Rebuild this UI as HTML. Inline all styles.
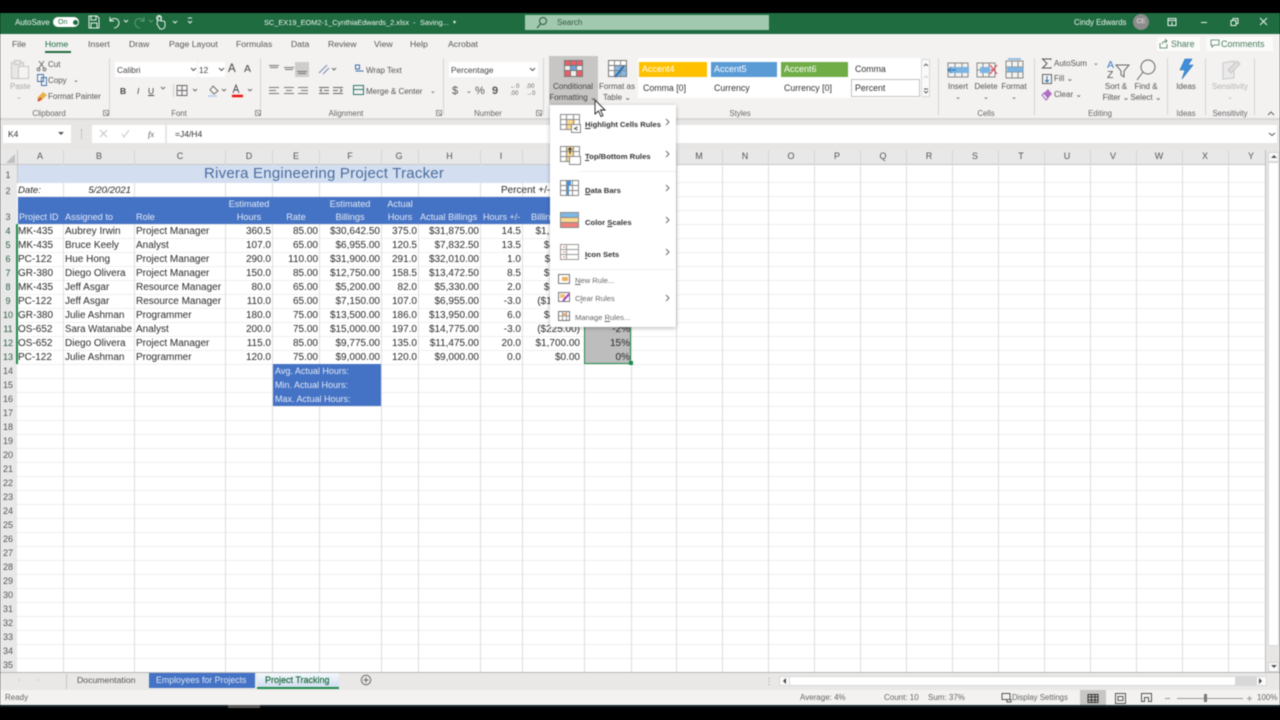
<!DOCTYPE html>
<html><head><meta charset="utf-8"><title>Excel</title>
<style>
html,body{margin:0;padding:0;background:#000;width:1280px;height:720px;overflow:hidden}
#w{position:relative;width:1280px;height:720px;overflow:hidden;font-family:"Liberation Sans",sans-serif;color:#444;filter:blur(.4px)}
#w div,#w svg{position:absolute}
.t{position:absolute;white-space:nowrap;font-size:8px;line-height:12px;color:#555;margin-top:1px}
.n{margin-top:0}
.tab{font-size:8.700px;color:#555;top:38px;margin-top:0}
.gl{font-size:7.800px;top:107px;color:#666;transform:translateX(-50%)}
.c{transform:translateX(-50%);text-align:center}
.h{position:absolute;top:149px;height:15px;line-height:15px;font-size:9px;color:#555;text-align:center}
.r{position:absolute;left:0;width:16px;height:14px;line-height:14px;text-align:center;font-size:9px;color:#555}
.v{position:absolute;top:164px;width:1px;height:508px;background:#dedede}
.row{position:absolute;left:0;width:640px;height:14px}
.row span{position:absolute;top:1px;line-height:14px;font-size:10px;color:#2a2a2a;white-space:nowrap}
.a{left:18px}.b{left:65px}.cc{left:136px}
.d,.e,.f,.g,.hh,.i,.j,.k{text-align:right}
.d{right:369px}.e{right:322px}.f{right:260px}.g{right:223px}.hh{right:161px}.i{right:119px}.j{right:60px}.k{right:10px}
.w{position:absolute;font-size:9.200px;line-height:13px;color:#e4ebf7;white-space:nowrap}
.m{position:absolute;white-space:nowrap;font-size:7.700px;line-height:12px;color:#333;font-weight:bold;margin-top:.5px}
.m2{position:absolute;white-space:nowrap;font-size:7.600px;line-height:12px;color:#666;margin-top:1px}
.sb{position:absolute;font-size:8px;line-height:12px;color:#666;white-space:nowrap;top:692px}
.s{left:0;top:58px;width:1px;height:57px;background:#d5d3d1}
</style></head><body><div id="w">
<!-- title bar -->
<div style="left:0;top:13px;width:1280px;height:21px;background:#1f6c41"></div>
<span class="t" style="left:15px;top:16px;color:#f0f5f0">AutoSave</span>
<div style="left:53px;top:17px;width:26px;height:10px;border-radius:6px;background:#fff"></div>
<div style="left:73px;top:19.500px;width:5px;height:5px;border-radius:3px;background:#1f6c41"></div>
<span class="t" style="left:58px;top:16px;color:#1f6c41;font-size:7px">On</span>
<svg style="left:86px;top:14px" width="110" height="16" fill="none" stroke="#e8f0ea" stroke-width="1"><path d="M3 2h8l2 2v10H3zM5 2v4h5V2M5 14V9h6v5"/><path d="M24 3v4h4M24 7c3-4 9-3 9 2 0 3-3 5-5 5"/><path d="M38 6l2 2 2-2"/><path d="M58 3v4h-4M58 7c-3-4-9-3-9 2 0 3 3 5 5 5" stroke="#5c9a76"/><path d="M63 6l2 2 2-2" stroke="#5c9a76"/><path d="M72 4c0-2 3-2 3 0v3h2c2 0 2 1 2 3v2c0 2-2 3-3 3h-2l-3-5z"/><circle cx="73" cy="4" r="2.500"/><path d="M87 7l2 2 2-2"/><path d="M102 4h4M102 7l2 2 2-2"/></svg>
<span class="t" style="left:264px;top:16px;color:#f0f5f0;font-size:7.400px">SC_EX19_EOM2-1_CynthiaEdwards_2.xlsx</span>
<span class="t" style="left:413px;top:16px;color:#f0f5f0;font-size:7.400px">-</span><span class="t" style="left:420px;top:16px;color:#f0f5f0;font-size:7.400px">Saving...</span><span class="t" style="left:453px;top:16px;color:#f0f5f0;font-size:6px">▾</span>
<div style="left:525px;top:15px;width:244px;height:15px;background:#a1c9af"></div>
<svg style="left:536px;top:16px" width="12" height="13" fill="none" stroke="#2a5a3d"><circle cx="7" cy="5" r="3.500"/><path d="M4.500 8L1 12"/></svg>
<span class="t" style="left:557px;top:16px;color:#33593f">Search</span>
<span class="t" style="left:1074px;top:16px;color:#f0f5f0;font-size:7.800px">Cindy Edwards</span>
<div style="left:1133px;top:14px;width:16px;height:16px;border-radius:8px;background:#8d8d8d;color:#eee;font-size:6.500px;line-height:16px;text-align:center">CE</div>
<svg style="left:1165px;top:14px" width="110" height="16" fill="none" stroke="#eaf2ec"><path d="M3 4.500h8v7H3zM3 6.500h8M7 8v3"/><path d="M36 8.500h6"/><path d="M66 6.500h5v5h-5zM68 6.500v-2h5v5h-2"/><path d="M95 4l7 7M102 4l-7 7"/></svg>
<!-- ribbon -->
<div style="left:0;top:34px;width:1280px;height:84px;background:#f3f2f1"></div>
<span class="t tab" style="left:12px">File</span>
<span class="t tab" style="left:45px;color:#1f6c41">Home</span>
<div style="left:45px;top:51px;width:26px;height:2px;background:#1f6c41"></div>
<span class="t tab" style="left:88px">Insert</span><span class="t tab" style="left:129px">Draw</span><span class="t tab" style="left:169px">Page Layout</span><span class="t tab" style="left:236px">Formulas</span><span class="t tab" style="left:291px">Data</span><span class="t tab" style="left:328px">Review</span><span class="t tab" style="left:374px">View</span><span class="t tab" style="left:410px">Help</span><span class="t tab" style="left:448px">Acrobat</span>
<div style="left:1157px;top:37px;width:43px;height:14px;background:#fbfbfa"></div>
<span class="t n" style="left:1171px;top:38px;font-size:8.800px;color:#4a7a5c">Share</span>
<svg style="left:1159px;top:38px" width="10" height="11" fill="none" stroke="#4a7a5c" stroke-width=".8"><path d="M1 5v5h7V6M3 6c1-3 3-3 5-3M6 1l2 2-2 2"/></svg>
<div style="left:1206px;top:37px;width:67px;height:14px;background:#fbfbfa"></div>
<span class="t n" style="left:1221px;top:38px;font-size:9px;color:#4a7a5c">Comments</span>
<svg style="left:1210px;top:38px" width="10" height="11" fill="none" stroke="#4a7a5c" stroke-width=".8"><path d="M1 2h8v5H4L2 9V7H1z"/></svg>
<!-- group seps -->
<div class="s" style="left:109px"></div><div class="s" style="left:260px"></div><div class="s" style="left:443px"></div><div class="s" style="left:543px"></div><div class="s" style="left:938px"></div><div class="s" style="left:1034px"></div><div class="s" style="left:1167px"></div><div class="s" style="left:1205px"></div><div class="s" style="left:1254px"></div>
<span class="t gl" style="left:49px">Clipboard</span><span class="t gl" style="left:179px">Font</span><span class="t gl" style="left:346px">Alignment</span><span class="t gl" style="left:488px">Number</span><span class="t gl" style="left:740px">Styles</span><span class="t gl" style="left:986px">Cells</span><span class="t gl" style="left:1100px">Editing</span><span class="t gl" style="left:1186px">Ideas</span><span class="t gl" style="left:1230px">Sensitivity</span>
<svg style="left:102px;top:109px" width="440" height="9" fill="none" stroke="#777" stroke-width=".8"><path d="M1.500 1.500h5v5h-5zM3 3l3 3M153.500 1.500h5v5h-5zM155 3l3 3M334.500 1.500h5v5h-5zM336 3l3 3M434.500 1.500h5v5h-5zM436 3l3 3"/></svg>
<svg style="left:1266px;top:110px" width="10" height="7" fill="none" stroke="#666"><path d="M2 5l3-3 3 3"/></svg>
<!-- clipboard -->
<svg style="left:10px;top:59px" width="21" height="21" fill="#e9e8e6" stroke="#c6c5c3"><path d="M1.500 3.500h12v16h-12z"/><path d="M4.500 1.500h6v4h-6z"/><path d="M8.500 7.500h10v12h-10z" fill="#f4f4f3"/></svg>
<span class="t" style="left:10px;top:80px;color:#a8a8a8">Paste</span><span class="t" style="left:16px;top:91px;color:#a8a8a8;font-size:7px">⌄</span>
<svg style="left:36px;top:59px" width="14" height="28" fill="none" stroke="#666" stroke-width=".9"><path d="M3 2l5 7M8 2L3 9"/><circle cx="2.500" cy="10.500" r="1.400"/><circle cx="8.500" cy="10.500" r="1.400"/><path d="M1.500 15.500h6v7h-6zM5.500 18.500h5v8h-5z" stroke="#3e6fa8"/></svg>
<svg style="left:35px;top:90px" width="13" height="13"><path d="M2 8l6-6 4 3-6 6z" fill="#e8b24a"/><path d="M3 11l3-3" stroke="#c43" stroke-width="2"/></svg>
<span class="t" style="left:48px;top:58px">Cut</span><span class="t" style="left:48px;top:74px">Copy</span><span class="t" style="left:73px;top:74px;font-size:7px">⌄</span><span class="t" style="left:48px;top:90px">Format Painter</span>
<!-- font -->
<div style="left:115px;top:62px;width:82px;height:15px;background:#fff"></div><div style="left:198px;top:62px;width:27px;height:15px;background:#fff"></div>
<span class="t n" style="left:117px;top:64px;color:#444;font-size:8.300px">Calibri</span><span class="t n" style="left:199px;top:64px;color:#444;font-size:8.300px">12</span>
<svg style="left:190px;top:67px" width="36" height="6" fill="none" stroke="#555"><path d="M1 1l2.500 2.500L6 1M29 1l2.500 2.500L34 1"/></svg>
<span class="t n" style="left:228px;top:63px;font-size:11.500px;color:#444">A</span><span class="t n" style="left:244px;top:63px;font-size:10.500px;color:#444">A</span>
<span class="t" style="left:120px;top:84px;font-weight:bold;color:#444;font-size:8.500px">B</span><span class="t" style="left:137px;top:84px;font-style:italic;color:#444;font-size:8.500px">I</span><span class="t" style="left:148px;top:84px;text-decoration:underline;color:#444;font-size:8.500px">U</span>
<svg style="left:160px;top:82px" width="96" height="16" fill="none" stroke="#666" stroke-width=".9"><path d="M1 5l2 2 2-2"/><path d="M13.500 2v13" stroke="#ccc"/><path d="M17 3.500h10v10H17zM22 3.500v10M17 8.500h10"/><path d="M33 7l2 2 2-2"/><path d="M53 4l5 5-4 3-4-4z"/><path d="M48 14h9" stroke="#c6d4ee" stroke-width="2"/><path d="M62 7l2 2 2-2"/><path d="M73 11l3-8 3 8M74 8h4" stroke="#444"/><path d="M72 14h11" stroke="#e11" stroke-width="2.500"/><path d="M88 7l2 2 2-2"/></svg>
<!-- alignment -->
<div style="left:295px;top:62px;width:14px;height:15px;background:#cfcdcb"></div>
<svg style="left:267px;top:62px" width="70" height="36" fill="none" stroke="#777"><path d="M2 3.500h10M3 5.500h8M17 5.500h10M18 7.500h8M30 9.500h10M31 11.500h8"/><path d="M2 25.500h10M2 28.500h7M2 31.500h10M17 25.500h10M19 28.500h6M17 31.500h10M31 25.500h10M34 28.500h7M31 31.500h10"/></svg>
<svg style="left:318px;top:62px" width="48" height="36" fill="none" stroke="#666"><path d="M1 11L9 3M5 12L11 6" stroke="#7a8aa8"/><path d="M14 6l2 2 2-2"/><path d="M1 25.500h10M1 31.500h10M6 28.500h5M4 27l-2 1.500 2 1.500"/><path d="M15 25.500h10M15 31.500h10M15 28.500h5M22 27l2 1.500-2 1.500"/></svg>
<svg style="left:353px;top:62px" width="12" height="36" fill="none"><path d="M2.500 3h4v4h-4zM2.500 9h8" stroke="#3e6fa8"/><path d="M.5 23.500h10v9H.5zM.5 27.500h10" stroke="#2f7a6b"/></svg>
<span class="t" style="left:366px;top:64px">Wrap Text</span><span class="t" style="left:366px;top:85px">Merge &amp; Center</span><span class="t" style="left:430px;top:85px;font-size:7px">⌄</span>
<!-- number -->
<div style="left:449px;top:62px;width:89px;height:15px;background:#fff"></div>
<span class="t n" style="left:451px;top:64px;color:#444;font-size:8.300px">Percentage</span>
<svg style="left:529px;top:67px" width="8" height="6" fill="none" stroke="#555"><path d="M1 1l2.500 2.500L6 1"/></svg>
<span class="t" style="left:452px;top:84px;font-size:11px;color:#555">$</span><span class="t" style="left:466px;top:85px;font-size:7px">⌄</span><span class="t" style="left:475px;top:84px;font-size:11px;color:#555">%</span><span class="t" style="left:492px;top:84px;font-size:11px;font-weight:bold;color:#555">9</span>
<span class="t" style="left:510px;top:83px;font-size:6px;color:#666;line-height:7px">←0<br>.00</span><span class="t" style="left:526px;top:83px;font-size:6px;color:#666;line-height:7px">.00<br>→0</span>
<!-- conditional formatting -->
<div style="left:549px;top:56px;width:49px;height:49px;background:#c8c6c4"></div>
<svg style="left:564px;top:60px" width="19" height="17"><rect x=".5" y=".5" width="18" height="16" fill="#eee" stroke="#777"/><rect x="1" y="1" width="6" height="5" fill="#e95f66"/><rect x="13" y="1" width="5" height="5" fill="#e95f66"/><rect x="7" y="6" width="6" height="5" fill="#6aa5dc"/><rect x="1" y="11" width="6" height="5" fill="#e95f66"/><rect x="7" y="1" width="6" height="5" fill="#e95f66"/><rect x="13" y="11" width="5" height="5" fill="#e95f66"/><path d="M6.500 1v15M12.500 1v15M1 5.500h17M1 10.500h17" stroke="#777" fill="none"/></svg>
<span class="t c" style="left:573px;top:80px;color:#444">Conditional</span><span class="t c" style="left:573px;top:91px;color:#444">Formatting ⌄</span>
<svg style="left:608px;top:60px" width="20" height="20"><rect x=".5" y=".5" width="18" height="16" fill="#fff" stroke="#777"/><path d="M1 5.500h17" stroke="#777"/><rect x="7" y="6" width="11" height="10" fill="#86b8e4"/><path d="M6.500 1v15M12.500 1v15M1 10.500h17" stroke="#888" fill="none"/><path d="M7 17L16 6" stroke="#2f6fb0" stroke-width="2"/></svg>
<span class="t c" style="left:617px;top:80px">Format as</span><span class="t c" style="left:617px;top:91px">Table ⌄</span>
<!-- styles gallery -->
<div style="left:638px;top:58px;width:283px;height:40px;background:#fff"></div>
<div style="left:639px;top:62px;width:68px;height:15px;background:#ffc000;color:#fff;font-size:9px;line-height:15px;text-indent:3px">Accent4</div>
<div style="left:711px;top:62px;width:66px;height:15px;background:#5b9bd5;color:#fff;font-size:9px;line-height:15px;text-indent:3px">Accent5</div>
<div style="left:781px;top:62px;width:67px;height:15px;background:#70ad47;color:#fff;font-size:9px;line-height:15px;text-indent:3px">Accent6</div>
<span class="t n" style="left:855px;top:63px;color:#333;font-size:8.800px">Comma</span><span class="t n" style="left:643px;top:82px;color:#333;font-size:8.800px">Comma [0]</span><span class="t n" style="left:714px;top:82px;color:#333;font-size:8.800px">Currency</span><span class="t n" style="left:784px;top:82px;color:#333;font-size:8.800px">Currency [0]</span>
<div style="left:851px;top:79px;width:67px;height:16px;border:1.500px solid #c2c2c2;background:#fff"></div><span class="t n" style="left:855px;top:82px;color:#333;font-size:8.800px">Percent</span>
<div style="left:921px;top:59px;width:9px;height:38px;background:#fafafa;border:1px solid #d8d8d8;box-sizing:border-box"></div>
<svg style="left:922px;top:60px" width="8" height="37" fill="none" stroke="#555" stroke-width=".9"><path d="M2 6l2-2 2 2"/><path d="M2 18l2-2 2 2" stroke="#ccc"/><path d="M2 29h4M2 31l2 2 2-2"/></svg>
<!-- cells -->
<svg style="left:947px;top:58px" width="80" height="22" fill="none"><path d="M1 5h20v14H1zM8 5v14M15 5v14M1 12h20" stroke="#888"/><rect x="3" y="9" width="19" height="6" fill="#7cb3e0"/><path d="M9 12H1M4 9l-3 3 3 3" stroke="#2f75b5"/><path d="M30 5h18v14H30zM36 5v14M42 5v14M30 12h18" stroke="#888"/><rect x="33" y="9" width="10" height="6" fill="#7cb3e0"/><path d="M43 7l7 9M50 7l-7 9" stroke="#d9505a" stroke-width="1.200"/><path d="M59 3h17v17H59zM65 3v17M71 3v17M59 9h17M59 14h17" stroke="#888"/><rect x="60" y="9" width="16" height="5" fill="#7cb3e0"/><path d="M61 1h13" stroke="#7cb3e0" stroke-width="1.500"/></svg>
<span class="t c" style="left:958px;top:80px">Insert</span><span class="t c" style="left:986px;top:80px">Delete</span><span class="t c" style="left:1014px;top:80px">Format</span>
<span class="t c" style="left:958px;top:91px;font-size:7px">⌄</span><span class="t c" style="left:986px;top:91px;font-size:7px">⌄</span><span class="t c" style="left:1014px;top:91px;font-size:7px">⌄</span>
<!-- editing -->
<svg style="left:1041px;top:58px" width="12" height="12" fill="none" stroke="#555"><path d="M10 2V1H1.500l4.500 4.500L1.500 10H10V9"/></svg>
<span class="t" style="left:1054px;top:57px">AutoSum</span><span class="t" style="left:1093px;top:57px;font-size:7px">⌄</span>
<svg style="left:1041px;top:73px" width="12" height="12" fill="none"><path d="M1.500 1.500h9v9h-9z" stroke="#666"/><path d="M6 3v6M4 7l2 2 2-2" stroke="#2f75b5"/></svg>
<span class="t" style="left:1054px;top:72px">Fill ⌄</span>
<svg style="left:1041px;top:88px" width="12" height="13"><path d="M1 7l6-6 4 5-6 6z" fill="#b06fc4"/><path d="M1 7l4 5 2-2-4-5z" fill="#eee" stroke="#a060b8"/></svg>
<span class="t" style="left:1054px;top:88px">Clear ⌄</span>
<span class="t n" style="left:1107px;top:60px;font-size:10.500px;color:#3a78bd;line-height:10px">A</span><span class="t n" style="left:1107px;top:70px;font-size:10.500px;color:#555;line-height:10px">Z</span>
<svg style="left:1114px;top:58px" width="48" height="24" fill="none" stroke="#666"><path d="M2 7h13l-5 6v6l-3-2v-4z"/><circle cx="34" cy="9" r="7"/><path d="M29 14l-6 8"/></svg>
<span class="t c" style="left:1116px;top:80px">Sort &amp;</span><span class="t c" style="left:1116px;top:91px">Filter ⌄</span><span class="t c" style="left:1146px;top:80px">Find &amp;</span><span class="t c" style="left:1146px;top:91px">Select ⌄</span>
<!-- ideas / sensitivity -->
<svg style="left:1177px;top:58px" width="18" height="22"><path d="M8 1h7l-4 6h5L5 21l3-9H3z" fill="#3f8fdc" stroke="#2f6fb0" stroke-width=".6"/></svg>
<span class="t c" style="left:1186px;top:80px">Ideas</span>
<svg style="left:1222px;top:58px" width="20" height="24" fill="none" stroke="#c9c9c9"><path d="M1 5l11-2v17l-11 1z" fill="#eaeaea"/><path d="M6 12l9-9 3 3-9 9z" fill="#ddd"/></svg>
<span class="t c" style="left:1230px;top:80px;color:#b5b5b5">Sensitivity</span><span class="t c" style="left:1230px;top:91px;font-size:7px;color:#b5b5b5">⌄</span>
<!-- formula bar -->
<div style="left:0;top:118px;width:1280px;height:32px;background:#e7e6e5"></div>
<div style="left:0;top:118px;width:1280px;height:2px;background:#d9d7d6"></div>
<div style="left:3px;top:125px;width:68px;height:18px;background:#fff"></div>
<span class="t n" style="left:8px;top:128px;color:#333;font-size:8.500px">K4</span>
<svg style="left:58px;top:132px" width="7" height="4"><path d="M0 0h6L3 3z" fill="#555"/></svg>
<div style="left:81px;top:129px;width:1px;height:10px;border-left:1px dotted #aaa"></div>
<div style="left:92px;top:125px;width:73px;height:18px;background:#fff"></div>
<div style="left:167px;top:125px;width:1110px;height:18px;background:#fff"></div>
<svg style="left:99px;top:129px" width="36" height="10" fill="none" stroke="#c4c4c4"><path d="M1 1l7 7M8 1L1 8M23 5l2 3 5-7"/></svg>
<span class="t n" style="left:148px;top:128px;font-style:italic;font-family:'Liberation Serif',serif;color:#555;font-size:8.500px">fx</span>
<span class="t n" style="left:175px;top:128px;color:#333;font-size:8.500px">=J4/H4</span>
<svg style="left:1268px;top:132px" width="8" height="5" fill="none" stroke="#555"><path d="M1 1l3 2.500L7 1"/></svg>
<!-- sheet -->
<div style="left:0;top:150px;width:1266px;height:522px;background:#fff"></div>
<div style="left:0;top:150px;width:1266px;height:15px;background:#e8e8e8"></div>
<div style="left:0;top:165px;width:17px;height:507px;background:#e8e8e8"></div>
<div style="left:0;top:164px;width:1266px;height:1px;background:#c6c6c6"></div>
<div style="left:17px;top:150px;width:1px;height:522px;background:#c6c6c6"></div>
<svg style="left:6px;top:154px" width="10" height="10"><path d="M9 0v9H0z" fill="#c0c0c0"/></svg>
<div style="left:17px;top:183px;width:1248px;height:489px;background:repeating-linear-gradient(to bottom,#fff 0,#fff 13px,#eeeeee 13px,#eeeeee 14px)"></div>
<div style="left:18px;top:165px;width:1247px;height:18px;background:#fff;border-bottom:1px solid #eee;box-sizing:border-box"></div>
<div class="v" style="left:63px"></div><div class="v" style="left:134px"></div><div class="v" style="left:225px"></div><div class="v" style="left:272px"></div><div class="v" style="left:319px"></div><div class="v" style="left:381px"></div><div class="v" style="left:418px"></div><div class="v" style="left:480px"></div><div class="v" style="left:522px"></div><div class="v" style="left:584px"></div><div class="v" style="left:631px"></div><div class="v" style="left:676px"></div><div class="v" style="left:722px"></div><div class="v" style="left:768px"></div><div class="v" style="left:814px"></div><div class="v" style="left:860px"></div><div class="v" style="left:906px"></div><div class="v" style="left:952px"></div><div class="v" style="left:998px"></div><div class="v" style="left:1044px"></div><div class="v" style="left:1090px"></div><div class="v" style="left:1136px"></div><div class="v" style="left:1182px"></div><div class="v" style="left:1228px"></div>
<!-- col heads -->
<span class="h" style="left:17px;width:46px">A</span><span class="h" style="left:63px;width:72px">B</span><span class="h" style="left:135px;width:90px">C</span><span class="h" style="left:225px;width:48px">D</span><span class="h" style="left:273px;width:46px">E</span><span class="h" style="left:319px;width:62px">F</span><span class="h" style="left:380px;width:38px">G</span><span class="h" style="left:419px;width:61px">H</span><span class="h" style="left:480px;width:42px">I</span><span class="h" style="left:676px;width:46px">M</span><span class="h" style="left:722px;width:46px">N</span><span class="h" style="left:768px;width:46px">O</span><span class="h" style="left:814px;width:46px">P</span><span class="h" style="left:860px;width:46px">Q</span><span class="h" style="left:906px;width:46px">R</span><span class="h" style="left:952px;width:46px">S</span><span class="h" style="left:998px;width:46px">T</span><span class="h" style="left:1044px;width:46px">U</span><span class="h" style="left:1090px;width:46px">V</span><span class="h" style="left:1136px;width:46px">W</span><span class="h" style="left:1182px;width:46px">X</span><span class="h" style="left:1228px;width:46px">Y</span>
<svg style="left:0;top:150px" width="1240" height="15" fill="none" stroke="#d6d6d6"><path d="M63.500 0v14M134.500 0v14M225.500 0v14M272.500 0v14M319.500 0v14M381.500 0v14M418.500 0v14M480.500 0v14M522.500 0v14M676.500 0v14M722.500 0v14M768.500 0v14M814.500 0v14M860.500 0v14M906.500 0v14M952.500 0v14M998.500 0v14M1044.500 0v14M1090.500 0v14M1136.500 0v14M1182.500 0v14M1228.500 0v14"/></svg>
<!-- row heads -->
<span class="r" style="top:168px">1</span><span class="r" style="top:184px">2</span><span class="r" style="top:210px">3</span><span class="r" style="top:224px;color:#2d5e41">4</span><span class="r" style="top:238px;color:#2d5e41">5</span><span class="r" style="top:252px;color:#2d5e41">6</span><span class="r" style="top:266px;color:#2d5e41">7</span><span class="r" style="top:280px;color:#2d5e41">8</span><span class="r" style="top:294px;color:#2d5e41">9</span><span class="r" style="top:308px;color:#2d5e41">10</span><span class="r" style="top:322px;color:#2d5e41">11</span><span class="r" style="top:336px;color:#2d5e41">12</span><span class="r" style="top:350px;color:#2d5e41">13</span><span class="r" style="top:364px">14</span><span class="r" style="top:378px">15</span><span class="r" style="top:392px">16</span><span class="r" style="top:406px">17</span><span class="r" style="top:420px">18</span><span class="r" style="top:434px">19</span><span class="r" style="top:448px">20</span><span class="r" style="top:462px">21</span><span class="r" style="top:476px">22</span><span class="r" style="top:490px">23</span><span class="r" style="top:504px">24</span><span class="r" style="top:518px">25</span><span class="r" style="top:532px">26</span><span class="r" style="top:546px">27</span><span class="r" style="top:560px">28</span><span class="r" style="top:574px">29</span><span class="r" style="top:588px">30</span><span class="r" style="top:602px">31</span><span class="r" style="top:616px">32</span><span class="r" style="top:630px">33</span><span class="r" style="top:644px">34</span><span class="r" style="top:658px">35</span>
<div style="left:16px;top:224px;width:2px;height:140px;background:#1f8a4c"></div>
<!-- title & headers -->
<div style="left:18px;top:165px;width:613px;height:18px;background:#d3dff1"></div>
<span class="t n" style="left:204px;top:164px;font-size:15px;line-height:19px;color:#4a6c9c;letter-spacing:.22px">Rivera Engineering Project Tracker</span>
<div class="row" style="top:183px"><span class="a" style="font-style:italic;font-size:9.600px">Date:</span><span style="right:509px;font-style:italic;font-size:9.600px">5/20/2021</span><span style="left:501px">Percent +/-</span></div>
<div style="left:18px;top:197px;width:613px;height:27px;background:#4472c4"></div>
<span class="w c" style="left:249px;top:198px">Estimated</span><span class="w c" style="left:249px;top:211px">Hours</span><span class="w c" style="left:296px;top:211px">Rate</span><span class="w c" style="left:350px;top:198px">Estimated</span><span class="w c" style="left:350px;top:211px">Billings</span><span class="w c" style="left:400px;top:198px">Actual</span><span class="w c" style="left:400px;top:211px">Hours</span><span class="w" style="left:420px;top:211px">Actual Billings</span><span class="w" style="left:483px;top:211px;font-size:9px">Hours +/-</span><span class="w" style="left:531px;top:211px">Billings +/-</span><span class="w" style="left:19px;top:211px;font-size:9px">Project ID</span><span class="w" style="left:65px;top:211px">Assigned to</span><span class="w" style="left:136px;top:211px">Role</span>
<!-- selection -->
<div style="left:584px;top:224px;width:47px;height:140px;background:#bdbdbd;box-sizing:border-box;border:1px solid #1f8a4c"></div>
<div style="left:629px;top:361px;width:4px;height:4px;background:#1f8a4c"></div>
<!-- data -->
<div class="row" style="top:224px"><span class="a">MK-435</span><span class="b">Aubrey Irwin</span><span class="cc">Project Manager</span><span class="d">360.5</span><span class="e">85.00</span><span class="f">$30,642.50</span><span class="g">375.0</span><span class="hh">$31,875.00</span><span class="i">14.5</span><span class="j">$1,232.50</span><span class="k">4%</span></div>
<div class="row" style="top:238px"><span class="a">MK-435</span><span class="b">Bruce Keely</span><span class="cc">Analyst</span><span class="d">107.0</span><span class="e">65.00</span><span class="f">$6,955.00</span><span class="g">120.5</span><span class="hh">$7,832.50</span><span class="i">13.5</span><span class="j">$877.50</span><span class="k">13%</span></div>
<div class="row" style="top:252px"><span class="a">PC-122</span><span class="b">Hue Hong</span><span class="cc">Project Manager</span><span class="d">290.0</span><span class="e">110.00</span><span class="f">$31,900.00</span><span class="g">291.0</span><span class="hh">$32,010.00</span><span class="i">1.0</span><span class="j">$110.00</span><span class="k">0%</span></div>
<div class="row" style="top:266px"><span class="a">GR-380</span><span class="b">Diego Olivera</span><span class="cc">Project Manager</span><span class="d">150.0</span><span class="e">85.00</span><span class="f">$12,750.00</span><span class="g">158.5</span><span class="hh">$13,472.50</span><span class="i">8.5</span><span class="j">$722.50</span><span class="k">6%</span></div>
<div class="row" style="top:280px"><span class="a">MK-435</span><span class="b">Jeff Asgar</span><span class="cc">Resource Manager</span><span class="d">80.0</span><span class="e">65.00</span><span class="f">$5,200.00</span><span class="g">82.0</span><span class="hh">$5,330.00</span><span class="i">2.0</span><span class="j">$130.00</span><span class="k">3%</span></div>
<div class="row" style="top:294px"><span class="a">PC-122</span><span class="b">Jeff Asgar</span><span class="cc">Resource Manager</span><span class="d">110.0</span><span class="e">65.00</span><span class="f">$7,150.00</span><span class="g">107.0</span><span class="hh">$6,955.00</span><span class="i">-3.0</span><span class="j">($195.00)</span><span class="k">-3%</span></div>
<div class="row" style="top:308px"><span class="a">GR-380</span><span class="b">Julie Ashman</span><span class="cc">Programmer</span><span class="d">180.0</span><span class="e">75.00</span><span class="f">$13,500.00</span><span class="g">186.0</span><span class="hh">$13,950.00</span><span class="i">6.0</span><span class="j">$450.00</span><span class="k">3%</span></div>
<div class="row" style="top:322px"><span class="a">OS-652</span><span class="b" style="font-size:9.700px">Sara Watanabe</span><span class="cc">Analyst</span><span class="d">200.0</span><span class="e">75.00</span><span class="f">$15,000.00</span><span class="g">197.0</span><span class="hh">$14,775.00</span><span class="i">-3.0</span><span class="j">($225.00)</span><span class="k">-2%</span></div>
<div class="row" style="top:336px"><span class="a">OS-652</span><span class="b">Diego Olivera</span><span class="cc">Project Manager</span><span class="d">115.0</span><span class="e">85.00</span><span class="f">$9,775.00</span><span class="g">135.0</span><span class="hh">$11,475.00</span><span class="i">20.0</span><span class="j">$1,700.00</span><span class="k">15%</span></div>
<div class="row" style="top:350px"><span class="a">PC-122</span><span class="b">Julie Ashman</span><span class="cc">Programmer</span><span class="d">120.0</span><span class="e">75.00</span><span class="f">$9,000.00</span><span class="g">120.0</span><span class="hh">$9,000.00</span><span class="i">0.0</span><span class="j">$0.00</span><span class="k">0%</span></div>
<div style="left:273px;top:364px;width:108px;height:42px;background:#4472c4"></div>
<span class="w" style="left:275px;top:365px;font-size:9px">Avg. Actual Hours:</span><span class="w" style="left:275px;top:379px;font-size:9px">Min. Actual Hours:</span><span class="w" style="left:275px;top:393px;font-size:9px">Max. Actual Hours:</span>
<!-- menu -->
<div style="left:550px;top:105px;width:126px;height:222px;background:#fff;box-shadow:0 1px 4px rgba(0,0,0,.3)"></div>
<svg style="left:559px;top:112px" width="24" height="154">
<g fill="none" stroke="#8a8a8a"><rect x="1.500" y="2.500" width="19" height="15" fill="#fff"/><rect x="8" y="7" width="8" height="10" fill="#fbd98f" stroke="none"/><path d="M7.500 3v14M14.500 3v14M2 7.500h18M2 12.500h18"/><rect x="12.500" y="12.500" width="9" height="8" fill="#fff"/><path d="M18.500 15l-3 1.500 3 1.500" stroke="#555"/></g>
<g transform="translate(0,32)" fill="none" stroke="#8a8a8a"><rect x="1.500" y="2.500" width="19" height="15" fill="#fff"/><rect x="8" y="3" width="6" height="14" fill="#fbd98f" stroke="none"/><path d="M7.500 3v14M14.500 3v14M2 7.500h18M2 12.500h18"/><path d="M11 10V4M9 6l2-2 2 2" stroke="#333"/><rect x="10.500" y="12.500" width="11" height="8" fill="#fff"/></g>
<g transform="translate(0,66)" fill="none" stroke="#8a8a8a"><rect x="1.500" y="2.500" width="18" height="15" fill="#fff"/><rect x="8" y="3" width="4" height="5" fill="#3d92dc" stroke="none"/><rect x="8" y="8" width="2" height="9" fill="#3d92dc" stroke="none"/><path d="M7.500 3v14M13.500 3v14M2 7.500h17M2 12.500h17"/></g>
<g transform="translate(0,98)" fill="none" stroke="#8a8a8a"><rect x="1.500" y="2.500" width="18" height="15" fill="#fff"/><rect x="2" y="3" width="17" height="5" fill="#7fb8e6" stroke="none"/><rect x="2" y="8" width="17" height="5" fill="#fbd98f" stroke="none"/><rect x="2" y="13" width="17" height="4" fill="#f08078" stroke="none"/><path d="M2 7.500h17M2 12.500h17"/></g>
<g transform="translate(0,130)" fill="none" stroke="#9a9a9a"><rect x="1.500" y="2.500" width="18" height="15"/><path d="M7.500 3v14M2 7.500h17M2 12.500h17"/><path d="M4 5h2M4 10h2M4 15h2" stroke="#d9805a"/></g>
</svg>
<svg style="left:557px;top:273px" width="14" height="50" fill="none"><rect x="1.500" y="1.500" width="11" height="9" stroke="#777"/><rect x="5" y="4" width="6" height="4" fill="#f0b060"/><rect x="1.500" y="19.500" width="11" height="9" stroke="#777"/><rect x="3" y="21" width="5" height="4" fill="#f0c080"/><path d="M6 28l6-7" stroke="#a040c0" stroke-width="2"/><rect x="1.500" y="38.500" width="11" height="9" stroke="#777"/><path d="M5.500 39v8M9.500 39v8M2 43h10" stroke="#999"/><rect x="6" y="40" width="3" height="3" fill="#f0b060"/></svg>
<span class="m" style="left:585px;top:118px;font-size:7.600px"><u>H</u>ighlight Cells Rules</span><span class="m" style="left:585px;top:150px"><u>T</u>op/Bottom Rules</span>
<span class="m" style="left:585px;top:184px"><u>D</u>ata Bars</span><span class="m" style="left:585px;top:216px">Color <u>S</u>cales</span><span class="m" style="left:585px;top:248px"><u>I</u>con Sets</span>
<span class="m2" style="left:575px;top:274px"><u>N</u>ew Rule...</span><span class="m2" style="left:575px;top:292px">C<u>l</u>ear Rules</span><span class="m2" style="left:575px;top:311px">Manage <u>R</u>ules...</span>
<svg style="left:665px;top:116px" width="6" height="190" fill="none" stroke="#666" stroke-width=".9"><path d="M1 3l3 3-3 3M1 35l3 3-3 3M1 69l3 3-3 3M1 101l3 3-3 3M1 133l3 3-3 3M1 179l3 3-3 3"/></svg>
<div style="left:580px;top:171px;width:96px;height:1px;background:#eee"></div><div style="left:552px;top:269px;width:122px;height:1px;background:#eee"></div>
<!-- cursor -->
<svg style="left:592px;top:99px" width="14" height="20"><path d="M3 1v14l3.500-3 2.500 5.500 2-1-2.500-5.500H13z" fill="#fff" stroke="#222" stroke-width=".9"/></svg>
<!-- vscroll -->
<div style="left:1265px;top:150px;width:15px;height:522px;background:#e7e6e5"></div>
<div style="left:1265px;top:150px;width:1px;height:522px;background:#bdbdbd"></div>
<div style="left:1268px;top:152px;width:11px;height:10px;background:#fafafa;border:1px solid #d4d4d4;box-sizing:border-box"></div>
<svg style="left:1271px;top:155px" width="6" height="4"><path d="M0 3l3-3 3 3z" fill="#555"/></svg>
<div style="left:1268px;top:162px;width:11px;height:484px;background:#fff;border:1px solid #dadada;box-sizing:border-box"></div>
<div style="left:1268px;top:662px;width:11px;height:10px;background:#fafafa;border:1px solid #d4d4d4;box-sizing:border-box"></div>
<svg style="left:1271px;top:665px" width="6" height="4"><path d="M0 0l3 3 3-3z" fill="#555"/></svg>
<div style="left:0;top:672px;width:1280px;height:1px;background:#b5b5b5"></div>
<!-- tabs -->
<div style="left:0;top:673px;width:1280px;height:17px;background:#e9e8e7"></div>
<div style="left:66px;top:674px;width:1px;height:15px;background:#c4c4c4"></div>
<span class="t n" style="left:18px;top:675px;color:#c0c0c0;font-size:7px">‹</span><span class="t n" style="left:37px;top:675px;color:#c0c0c0;font-size:7px">›</span>
<span class="t n" style="left:77px;top:674px;font-size:8.700px;color:#555">Documentation</span>
<div style="left:149px;top:673px;width:106px;height:15px;background:#4472c4"></div>
<span class="t n" style="left:156px;top:674px;font-size:8.800px;color:#dfe7f5">Employees for Projects</span>
<div style="left:257px;top:673px;width:82px;height:15px;background:linear-gradient(#f5f8fc,#cfdcf0)"></div>
<div style="left:257px;top:687px;width:82px;height:1.500px;background:#1f8a4c"></div>
<span class="t n" style="left:265px;top:674px;font-size:9px;color:#1a6a3c;-webkit-text-stroke:.2px #1a6a3c">Project Tracking</span>
<svg style="left:360px;top:674px" width="12" height="12" fill="none" stroke="#666"><circle cx="6" cy="6" r="4.700"/><path d="M3.500 6h5M6 3.500v5"/></svg>
<svg style="left:768px;top:677px" width="4" height="9"><path d="M1 1v1M1 4v1M1 7v1" stroke="#999"/></svg>
<div style="left:779px;top:676px;width:488px;height:10px;background:#d8d8d8"></div>
<div style="left:790px;top:677px;width:445px;height:8px;background:#fff"></div>
<div style="left:780px;top:677px;width:9px;height:8px;background:#fafafa"></div><div style="left:1257px;top:677px;width:9px;height:8px;background:#fafafa"></div>
<svg style="left:780px;top:677px" width="486" height="8"><path d="M3 4l3-3v6zM482 4l-3-3v6z" fill="#444"/></svg>
<!-- status -->
<div style="left:0;top:690px;width:1280px;height:16px;background:#f3f2f1"></div>
<div style="left:0;top:705px;width:1280px;height:2px;background:#17252e"></div>
<div style="left:228px;top:705px;width:32px;height:3px;background:#555"></div>
<span class="sb" style="left:5px">Ready</span><span class="sb" style="left:800px">Average: 4%</span><span class="sb" style="left:884px">Count: 10</span><span class="sb" style="left:928px">Sum: 37%</span><span class="sb" style="left:1012px;font-size:7.800px">Display Settings</span><span class="sb" style="left:1257px">100%</span>
<svg style="left:1001px;top:692px" width="11" height="12" fill="none" stroke="#555"><path d="M1 1.500h8v6H1zM6 7v3h4V7"/></svg>
<div style="left:1080px;top:690px;width:26px;height:15px;background:#c8c6c4"></div>
<svg style="left:1087px;top:692px" width="75" height="12" fill="none" stroke="#555"><path d="M1 2.500h10v8H1zM4.500 2v9M8 2v9M1 5h10M1 8h10" stroke="#333"/><path d="M28.500 1.500h10v10h-10zM31 4.500h5v4h-5z"/><path d="M54.500 1.500h10v8h-3v-4h-4v4h-3z"/></svg>
<svg style="left:1163px;top:692px" width="90" height="12" fill="none" stroke="#999"><path d="M2 6.500h5M14 6.500h66M84 6.500h5M86.500 4v5"/><rect x="41" y="2" width="3" height="8" fill="#777" stroke="none"/></svg>
</div></body></html>
